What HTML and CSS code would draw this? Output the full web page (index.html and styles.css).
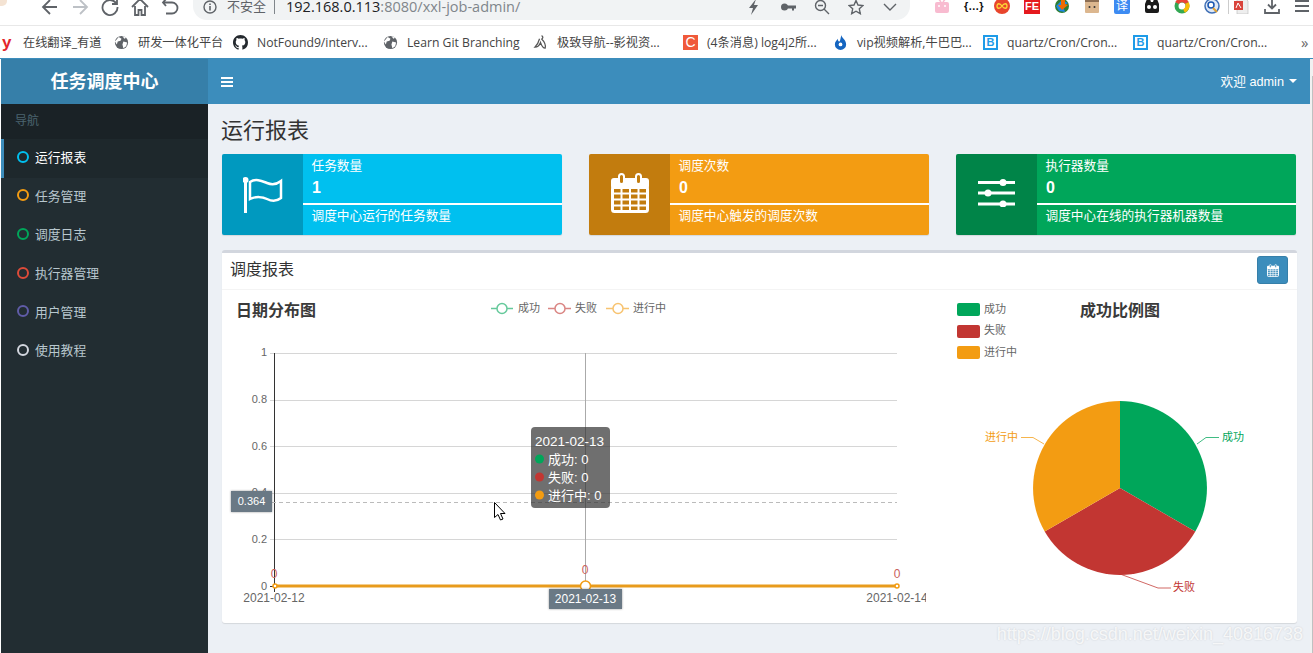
FILE: index.html
```html
<!DOCTYPE html>
<html lang="zh-CN">
<head>
    <meta charset="UTF-8">
    <meta name="viewport" content="width=device-width, initial-scale=1.0">
    <title>任务调度中心</title>
    <link rel="stylesheet" href="styles.css">
</head>
<body>
    <svg class="defs" width="0" height="0" aria-hidden="true">
        <symbol id="globe" viewBox="0 0 16 16">
            <circle cx="8" cy="8" r="7" fill="#5f6368"/>
            <path d="M5 2l3 2-1 2-3 1-1 3-2-3zM10 7l4 1-1 4-3 2-1-4zM9 1l4 2-2 1z" fill="#fff"/>
        </symbol>
        <symbol id="calendar" viewBox="0 0 38 40">
            <rect y="5" width="38" height="11" rx="3" fill="#fff"/>
            <rect x="8" y="1" width="5" height="10" rx="2.5" fill="currentColor" stroke="#fff" stroke-width="2"/>
            <rect x="25" y="1" width="5" height="10" rx="2.5" fill="currentColor" stroke="#fff" stroke-width="2"/>
            <rect x="1.5" y="14" width="35" height="24.5" rx="2" fill="none" stroke="#fff" stroke-width="3"/>
            <path d="M10.5 14v25M19 14v25M27.5 14v25M1 20.5h36M1 26.5h36M1 32.5h36" stroke="#fff" stroke-width="2" fill="none"/>
        </symbol>
    </svg>

    <!-- 浏览器工具栏 -->
    <div class="toolbar">
        <span class="avatar"></span>
        <div class="nav-icons">
            <svg viewBox="0 0 20 20"><path d="M17 10H4M10 3l-7 7 7 7" class="tb-line"/></svg>
            <svg viewBox="0 0 20 20"><path d="M3 10h13M10 3l7 7-7 7" class="tb-line tb-off"/></svg>
            <svg viewBox="0 0 20 20"><path d="M16 6a7.5 7.5 0 1 0 1.500 4M17 2v5h-5" class="tb-line"/></svg>
            <svg viewBox="0 0 20 20"><path d="M2 10l8-8 8 8M5 9v9h3.500v-5h3v5H15V9" class="tb-line"/></svg>
            <svg viewBox="0 0 20 20"><path d="M6 2L3 5.500 6 9M3 5.500h9a5.500 5.500 0 0 1 0 11H6" class="tb-line"/></svg>
        </div>
        <div class="address">
            <svg class="info-icon" viewBox="0 0 14 14"><circle cx="7" cy="7" r="6" fill="none" stroke="#5f6368" stroke-width="1.400"/><path d="M7 6v4.500M7 3.500v1.500" stroke="#5f6368" stroke-width="1.600"/></svg>
            <span class="not-secure">不安全</span>
            <span class="url"><b>192.168.0.113</b>:8080/xxl-job-admin/</span>
            <div class="address-icons">
                <svg viewBox="0 0 16 16"><path d="M10 0L3 9h4l-2 7 7-10H8z" fill="#5f6368"/></svg>
                <svg viewBox="0 0 16 16"><circle cx="4.500" cy="8" r="3.500" fill="#5f6368"/><path d="M7 6.500h9v3h-2v2h-2v-2H7z" fill="#5f6368"/></svg>
                <svg viewBox="0 0 16 16"><circle cx="6.500" cy="6.500" r="5" class="tb-thin"/><path d="M10 10l5 5M4 6.500h5" class="tb-thin"/></svg>
                <svg viewBox="0 0 16 16"><path d="M8 1.500l2 4.500 5 .5-3.700 3.300 1 4.900L8 12.200l-4.300 2.500 1-4.900L1 6.500l5-.5z" class="tb-thin"/></svg>
                <svg viewBox="0 0 16 16"><path d="M2 5l6 6 6-6" class="tb-thin"/></svg>
            </div>
        </div>
        <div class="extensions">
            <svg viewBox="0 0 16 16"><rect x="1" y="4" width="14" height="11" rx="2" fill="#f8bbd0"/><path d="M4 0l3 4M12 0L9 4" stroke="#f8bbd0" stroke-width="1.500"/><circle cx="5" cy="8" r="1" fill="#fff"/><circle cx="11" cy="8" r="1" fill="#fff"/></svg>
            <span class="ext-text">{…}</span>
            <svg viewBox="0 0 16 16"><circle cx="8" cy="8" r="8" fill="#e8452c"/><path d="M8 8c-2-3-5-3-5 0s3 3 5 0 5-3 5 0-3 3-5 0z" fill="none" stroke="#fdd835" stroke-width="1.300"/></svg>
            <span class="ext-fe">FE</span>
            <svg viewBox="0 0 16 16"><circle cx="8" cy="8" r="7" fill="#2e7d32"/><path d="M2 8l6-6 6 3-5 3 2 6-6-1z" fill="#1e88e5"/><path d="M7 1h4v5l3 1-6 5-4-5h3z" fill="#ef6c00"/></svg>
            <svg viewBox="0 0 16 16"><rect x="1" y="1" width="14" height="14" rx="1" fill="#dcb78f"/><rect x="1" y="1" width="14" height="3" fill="#8d6e53"/><circle cx="5.500" cy="9" r="1" fill="#333"/><circle cx="10.500" cy="9" r="1" fill="#333"/></svg>
            <span class="ext-yi">译</span>
            <svg viewBox="0 0 16 16"><path d="M3 1h3l1 3h2l1-3h3l2 5v7a2 2 0 0 1-2 2H3a2 2 0 0 1-2-2V6z" fill="#1a1a1a"/><circle cx="5" cy="9" r="2" fill="#fff"/><circle cx="11" cy="9" r="2" fill="#fff"/></svg>
            <svg viewBox="0 0 16 16"><circle cx="8" cy="8" r="5.500" fill="none" stroke="#34a853" stroke-width="4"/><path d="M3 5a6 6 0 0 1 10 0" fill="none" stroke="#ea4335" stroke-width="4"/><path d="M13 5a6 6 0 0 1-3 8" fill="none" stroke="#fbbc05" stroke-width="4"/></svg>
            <svg viewBox="0 0 16 16"><circle cx="8" cy="8" r="7" fill="#dfe8f5" stroke="#3f6fb5" stroke-width="1.500"/><circle cx="7" cy="7" r="3" fill="#fff" stroke="#1a56b0" stroke-width="1.500"/><path d="M9 10l4 4" stroke="#e0a030" stroke-width="2"/></svg>
            <span class="ext-sep"></span>
            <svg viewBox="0 0 16 16"><path d="M3 0h8l3 3v13H3z" fill="#eee" stroke="#bbb" stroke-width=".6"/><rect y="3" width="9" height="9" fill="#d9443c"/><path d="M2 10l2-5 3 5" fill="none" stroke="#fff"/></svg>
            <svg viewBox="0 0 16 16"><path d="M8 0v10M4 6.500L8 10.500l4-4M1 11v4h14v-4" class="tb-line"/></svg>
            <svg viewBox="0 0 16 16"><path d="M1 3h14M1 8h14M1 13h14" class="tb-line"/></svg>
        </div>
    </div>

    <!-- 书签栏 -->
    <div class="bookmarks">
        <div class="bookmark bookmark-first"><span class="bm-youdao">y</span><span>在线翻译_有道</span></div>
        <div class="bookmark bookmark-second"><svg class="bm-icon"><use href="#globe"/></svg><span>研发一体化平台</span></div>
        <div class="bookmark"><svg class="bm-icon" viewBox="0 0 16 16"><path fill="#24292e" d="M8 0C3.580 0 0 3.580 0 8c0 3.540 2.290 6.530 5.470 7.590.4.070.55-.17.55-.38 0-.19-.01-.82-.01-1.490-2.010.37-2.530-.49-2.690-.94-.09-.23-.48-.94-.82-1.130-.28-.15-.68-.52-.01-.53.630-.01 1.080.58 1.230.82.720 1.210 1.870.87 2.330.66.070-.52.280-.87.510-1.070-1.780-.2-3.640-.89-3.640-3.950 0-.87.310-1.590.820-2.150-.08-.2-.36-1.020.08-2.120 0 0 .67-.21 2.200.82.640-.18 1.320-.27 2-.27s1.360.09 2 .27c1.530-1.040 2.200-.82 2.200-.82.440 1.100.16 1.920.08 2.120.51.560.82 1.270.82 2.150 0 3.070-1.870 3.750-3.650 3.950.290.250.540.730.540 1.480 0 1.070-.01 1.930-.01 2.200 0 .210.150.460.550.380A8.010 8.010 0 0 0 16 8c0-4.420-3.580-8-8-8z"/></svg><span>NotFound9/interv...</span></div>
        <div class="bookmark"><svg class="bm-icon"><use href="#globe"/></svg><span>Learn Git Branching</span></div>
        <div class="bookmark"><svg class="bm-icon" viewBox="0 0 16 16"><path d="M9 1c2 0 2 3 0 3M9 4c3 3 5 6 4 10-2 0-4-3-5-6-1 3-3 5-6 5 2-2 4-5 5-9" fill="none" stroke="#555" stroke-width="1.300"/></svg><span>极致导航--影视资...</span></div>
        <div class="bookmark"><span class="bm-csdn">C</span><span>(4条消息) log4j2所...</span></div>
        <div class="bookmark"><svg class="bm-icon" viewBox="0 0 16 16"><path d="M9 0c0 3 5 5 5 10a6 6 0 0 1-12 0c0-3 2-4 3-6 0 2 1 3 2 3 1-2 1-4 2-7z" fill="#1565c0"/><circle cx="8" cy="10" r="2" fill="#fff"/></svg><span>vip视频解析,牛巴巴...</span></div>
        <div class="bookmark"><span class="bm-bean">B</span><span>quartz/Cron/Cron...</span></div>
        <div class="bookmark"><span class="bm-bean">B</span><span>quartz/Cron/Cron...</span></div>
        <span class="bm-more">»</span>
    </div>

    <div class="app">
        <!-- 左侧菜单 -->
        <aside class="sidebar">
            <div class="logo">任务调度中心</div>
            <div class="nav-header">导航</div>
            <ul class="menu">
                <li class="menu-item active"><i class="ring ring-aqua"></i>运行报表</li>
                <li class="menu-item"><i class="ring ring-yellow"></i>任务管理</li>
                <li class="menu-item"><i class="ring ring-green"></i>调度日志</li>
                <li class="menu-item"><i class="ring ring-red"></i>执行器管理</li>
                <li class="menu-item"><i class="ring ring-purple"></i>用户管理</li>
                <li class="menu-item"><i class="ring ring-gray"></i>使用教程</li>
            </ul>
        </aside>

        <div class="wrapper">
            <header class="topbar">
                <div class="hamburger"><span></span><span></span><span></span></div>
                <div class="user">欢迎 admin<i class="caret"></i></div>
            </header>

            <main class="content">
                <h1 class="page-title">运行报表</h1>

                <div class="info-row">
                    <div class="info-box bg-aqua">
                        <div class="info-icon-box">
                            <svg class="icon-flag" viewBox="0 0 40 36">
                                <rect x="1" y="2" width="3" height="34" fill="#fff"/>
                                <circle cx="2.500" cy="3" r="3" fill="#fff"/>
                                <path d="M7 5C13 1 19 4 24 6S33 8 38 4V21C33 25 28 24 24 22S13 19 7 22Z" fill="none" stroke="#fff" stroke-width="2.500"/>
                            </svg>
                        </div>
                        <div class="info-body">
                            <div class="info-label">任务数量</div>
                            <div class="info-number">1</div>
                            <div class="info-line"></div>
                            <div class="info-desc">调度中心运行的任务数量</div>
                        </div>
                    </div>
                    <div class="info-box bg-yellow">
                        <div class="info-icon-box">
                            <svg class="icon-calendar"><use href="#calendar"/></svg>
                        </div>
                        <div class="info-body">
                            <div class="info-label">调度次数</div>
                            <div class="info-number">0</div>
                            <div class="info-line"></div>
                            <div class="info-desc">调度中心触发的调度次数</div>
                        </div>
                    </div>
                    <div class="info-box bg-green">
                        <div class="info-icon-box">
                            <svg class="icon-sliders" viewBox="0 0 37 28">
                                <path d="M0 3.500h37M0 14h37M0 25h37" stroke="#fff" stroke-width="3"/>
                                <circle cx="25" cy="3.500" r="3.500" fill="#fff"/>
                                <circle cx="10" cy="14" r="3.500" fill="#fff"/>
                                <circle cx="25" cy="25" r="3.500" fill="#fff"/>
                            </svg>
                        </div>
                        <div class="info-body">
                            <div class="info-label">执行器数量</div>
                            <div class="info-number">0</div>
                            <div class="info-line"></div>
                            <div class="info-desc">调度中心在线的执行器机器数量</div>
                        </div>
                    </div>
                </div>

                <section class="panel">
                    <div class="panel-header">
                        <div class="panel-title">调度报表</div>
                        <button class="date-btn"><svg class="icon-btn"><use href="#calendar"/></svg></button>
                    </div>
                    <div class="panel-body">
                        <!-- 折线图, viewBox 用页面坐标 -->
                        <svg class="chart-line" viewBox="222 290 704 333">
                            <text x="236" y="316" class="chart-title">日期分布图</text>

                            <g class="legend-line">
                                <path d="M491 308.500h22" stroke="#00a65a"/>
                                <circle cx="502" cy="308.500" r="5" stroke="#00a65a"/>
                                <path d="M548 308.500h23" stroke="#c23632"/>
                                <circle cx="560" cy="308.500" r="5" stroke="#c23632"/>
                                <path d="M606 308.500h23" stroke="#f39c12"/>
                                <circle cx="618" cy="308.500" r="5" stroke="#f39c12"/>
                            </g>
                            <text x="518" y="312" class="legend-text">成功</text>
                            <text x="575" y="312" class="legend-text">失败</text>
                            <text x="633" y="312" class="legend-text">进行中</text>

                            <path class="grid" d="M270 353.500H897M270 400.500H897M270 446.500H897M270 493.500H897M270 539.500H897"/>
                            <path class="axis" d="M274.500 353V592M270 586.500H275"/>
                            <text x="267" y="356" class="tick tick-y">1</text>
                            <text x="267" y="403" class="tick tick-y">0.8</text>
                            <text x="267" y="450" class="tick tick-y">0.6</text>
                            <text x="267" y="496" class="tick tick-y">0.4</text>
                            <text x="267" y="543" class="tick tick-y">0.2</text>
                            <text x="267" y="590" class="tick tick-y">0</text>
                            <text x="274" y="602" class="tick tick-x">2021-02-12</text>
                            <text x="897" y="602" class="tick tick-x">2021-02-14</text>

                            <path class="cross-dash" d="M272 502.500H897"/>
                            <path class="cross-line" d="M585.500 353V586"/>
                            <path class="series" d="M275 586H897"/>
                            <circle cx="275" cy="586" r="2" class="dot"/>
                            <circle cx="897" cy="586" r="2" class="dot"/>
                            <circle cx="585.500" cy="586" r="5" class="dot"/>
                            <text x="274" y="578" class="zero-label">0</text>
                            <text x="585" y="574" class="zero-label">0</text>
                            <text x="897" y="578" class="zero-label">0</text>

                            <rect x="231" y="491" width="41" height="21" class="pointer-box"/>
                            <text x="251.500" y="505" class="pointer-text">0.364</text>
                            <rect x="549" y="589" width="73" height="20" class="pointer-box"/>
                            <text x="585.500" y="603" class="pointer-text pointer-date">2021-02-13</text>

                            <rect x="531" y="427" width="79" height="81" rx="4" class="tooltip-box"/>
                            <text x="535" y="446" class="tooltip-text tooltip-date">2021-02-13</text>
                            <circle cx="539.500" cy="459" r="4.500" fill="#00a65a"/>
                            <text x="548" y="464" class="tooltip-text">成功: 0</text>
                            <circle cx="539.500" cy="477" r="4.500" fill="#c23632"/>
                            <text x="548" y="482" class="tooltip-text">失败: 0</text>
                            <circle cx="539.500" cy="495" r="4.500" fill="#f39c12"/>
                            <text x="548" y="500" class="tooltip-text">进行中: 0</text>

                            <path class="mouse" d="M494.500 502.500v15l3.500-3 2.500 5.500 2.500-1-2.500-5.500h4.500z"/>
                        </svg>

                        <!-- 饼图 -->
                        <svg class="chart-pie" viewBox="926 290 371 333">
                            <rect x="957" y="303" width="23" height="13" rx="2" fill="#00a65a"/>
                            <rect x="957" y="325" width="23" height="13" rx="2" fill="#c23632"/>
                            <rect x="957" y="346" width="23" height="13" rx="2" fill="#f39c12"/>
                            <text x="984" y="313" class="legend-text">成功</text>
                            <text x="984" y="334" class="legend-text">失败</text>
                            <text x="984" y="356" class="legend-text">进行中</text>
                            <text x="1080" y="316" class="chart-title">成功比例图</text>

                            <path d="M1120 488V401A87 87 0 0 1 1195.300 531.500Z" fill="#00a65a"/>
                            <path d="M1120 488L1195.300 531.500A87 87 0 0 1 1044.700 531.500Z" fill="#c23632"/>
                            <path d="M1120 488L1044.700 531.500A87 87 0 0 1 1120 401Z" fill="#f39c12"/>

                            <path class="pie-lead" d="M1197 444L1206 437.500H1219" stroke="#00a65a"/>
                            <path class="pie-lead" d="M1120 574L1158 588H1171" stroke="#c23632"/>
                            <path class="pie-lead" d="M1044 444L1033 437.500H1021" stroke="#f39c12"/>
                            <text x="1222" y="441" class="pie-label label-green">成功</text>
                            <text x="1173" y="591" class="pie-label label-red">失败</text>
                            <text x="985" y="441" class="pie-label label-yellow">进行中</text>
                        </svg>
                    </div>
                </section>
            </main>
        </div>
        <div class="scrollbar"><div class="scroll-thumb"></div></div>
        <div class="watermark">https://blog.csdn.net/weixin_40816738</div>
    </div>
</body>
</html>
```

FILE: styles.css
```css
* {
    box-sizing: border-box;
}
html, body {
    height: 100%;
}
body {
    margin: 0;
    overflow: hidden;
    display: flex;
    flex-direction: column;
    background: #fff;
    font-family: "Liberation Sans", "Noto Sans CJK SC", sans-serif;
    color: #333;
}
.defs {
    position: absolute;
}

/* toolbar */
.toolbar {
    height: 26px;
    flex: none;
    display: flex;
    align-items: flex-start;
    overflow: hidden;
    border-bottom: 1px solid #e8e8e8;
    position: relative;
}
.avatar {
    width: 7px;
    height: 6px;
    flex: none;
    background: #f4e3d3;
    border-radius: 0 0 5px 0;
}
.nav-icons {
    display: flex;
    gap: 10px;
    margin-left: 33px;
    margin-top: -3px;
}
.nav-icons svg {
    width: 20px;
    height: 20px;
    flex: none;
}
.tb-line {
    fill: none;
    stroke: #5f6368;
    stroke-width: 1.8;
}
.tb-off {
    stroke: #bdc1c6;
}
.tb-thin {
    fill: none;
    stroke: #5f6368;
    stroke-width: 1.4;
}
.address {
    width: 717px;
    height: 20px;
    margin-left: 13px;
    flex: none;
    background: #f1f3f4;
    border-radius: 0 0 14px 14px;
    display: flex;
    align-items: center;
    padding: 0 10px 6px 10px;
}
.info-icon {
    width: 14px;
    height: 14px;
    flex: none;
}
.not-secure {
    margin-left: 10px;
    padding-right: 8px;
    font-size: 13px;
    line-height: 14px;
    color: #5f6368;
    border-right: 1px solid #80868b;
}
.url {
    margin-left: 11px;
    font-family: "Open Sans", "Noto Sans CJK SC", sans-serif;
    font-size: 14.5px;
    line-height: 14px;
    color: #80868b;
    white-space: nowrap;
}
.url b {
    font-weight: 400;
    color: #202124;
}
.address-icons {
    margin-left: auto;
    display: flex;
    gap: 18px;
    padding-right: 2px;
}
.address-icons svg {
    width: 16px;
    height: 16px;
}
.extensions {
    display: flex;
    align-items: center;
    gap: 14px;
    margin-left: 24px;
    margin-top: -2px;
}
.extensions svg,
.extensions span {
    width: 16px;
    height: 16px;
    flex: none;
}
.ext-text {
    font-size: 11px;
    font-weight: 700;
    line-height: 16px;
    text-align: center;
    white-space: nowrap;
    color: #111;
}
.ext-fe {
    background: #e5191e;
    color: #fff;
    font-size: 11px;
    font-weight: 700;
    line-height: 16px;
    text-align: center;
}
.ext-yi {
    background: #3d8bf2;
    border-radius: 2px;
    color: #fff;
    font-size: 12px;
    line-height: 16px;
    text-align: center;
}
.extensions .ext-sep {
    width: 1px;
    margin: 0 -9px 0 -6px;
    background: #ccc;
}

/* bookmarks */
.bookmarks {
    height: 32px;
    flex: none;
    display: flex;
    align-items: center;
    padding-left: 2px;
    font-family: "Open Sans", "Noto Sans CJK SC", sans-serif;
    font-size: 12.2px;
    color: #444;
    position: relative;
}
.bookmark {
    width: 150px;
    flex: none;
    display: flex;
    align-items: center;
    gap: 9px;
    white-space: nowrap;
}
.bookmark-first {
    width: 112px;
    gap: 13px;
}
.bookmark-second {
    width: 119px;
}
.bm-icon {
    width: 15px;
    height: 15px;
    flex: none;
}
.bm-youdao {
    width: 8px;
    color: #e3262b;
    font-family: "Liberation Sans", sans-serif;
    font-size: 17px;
    font-weight: 700;
    line-height: 15px;
}
.bm-csdn {
    width: 15px;
    height: 15px;
    background: #f0593a;
    color: #fff;
    font-family: "Liberation Sans", sans-serif;
    font-size: 14px;
    line-height: 15px;
    text-align: center;
}
.bm-bean {
    width: 15px;
    height: 15px;
    border: 2px solid #1e9be8;
    color: #1e9be8;
    font-family: "Liberation Sans", sans-serif;
    font-size: 11px;
    font-weight: 700;
    line-height: 11px;
    text-align: center;
}
.bm-more {
    margin-left: 18px;
    font-size: 15px;
    color: #666;
}

/* app */
.app {
    flex: 1;
    min-height: 0;
    display: flex;
    padding-left: 1px;
    border-top: 1px solid #3c8dbc;
    position: relative;
}
.sidebar {
    width: 207px;
    flex: none;
    background: #222d32;
}
.logo {
    height: 45px;
    background: #367fa9;
    color: #fff;
    font-size: 18px;
    font-weight: 700;
    line-height: 47px;
    text-align: center;
}
.nav-header {
    height: 35px;
    padding-left: 14px;
    background: #1a2226;
    color: #4b646f;
    font-size: 12px;
    line-height: 35px;
}
.menu {
    list-style: none;
    margin: 0;
    padding: 0;
}
.menu-item {
    height: 38.6px;
    display: flex;
    align-items: center;
    gap: 6px;
    padding-left: 16px;
    padding-bottom: 3px;
    border-left: 3px solid transparent;
    color: #b8c7ce;
    font-size: 12.8px;
}
.menu-item.active {
    background: #1e282c;
    border-left-color: #3c8dbc;
    color: #fff;
}
.ring {
    width: 12px;
    height: 12px;
    border: 2px solid;
    border-radius: 50%;
    margin-left: -3px;
}
.ring-aqua { border-color: #00c0ef; }
.ring-yellow { border-color: #f39c12; }
.ring-green { border-color: #00a65a; }
.ring-red { border-color: #dd4b39; }
.ring-purple { border-color: #605ca8; }
.ring-gray { border-color: #d2d6de; }

.wrapper {
    flex: 1;
    min-width: 0;
    display: flex;
    flex-direction: column;
    background: #ecf0f5;
}
.topbar {
    height: 45px;
    flex: none;
    display: flex;
    align-items: center;
    justify-content: space-between;
    padding: 0 13px 0 13px;
    background: #3c8dbc;
    color: #fff;
}
.hamburger {
    display: flex;
    flex-direction: column;
    gap: 2px;
    width: 12px;
}
.hamburger span {
    height: 2px;
    background: #fff;
}
.user {
    font-size: 12.7px;
    display: flex;
    align-items: center;
    padding-bottom: 2px;
}
.caret {
    margin-left: 5px;
    border-left: 4px solid transparent;
    border-right: 4px solid transparent;
    border-top: 4px solid #fff;
}

.content {
    flex: 1;
    min-height: 0;
    padding: 0 13px 0 14px;
}
.scrollbar {
    width: 3px;
    flex: none;
    padding-top: 17px;
    background: #f1f1f1;
}
.scroll-thumb {
    width: 1px;
    height: 100%;
    margin-left: 2px;
    background: #c1c1c1;
}
.page-title {
    height: 50px;
    margin: 0 0 0 -1px;
    font-size: 22px;
    font-weight: 400;
    line-height: 53px;
}
.info-row {
    display: grid;
    grid-template-columns: repeat(3, 340px);
    gap: 27px;
}
.info-box {
    height: 81px;
    display: flex;
    border-radius: 2px;
    overflow: hidden;
    color: #fff;
    box-shadow: 0 1px 1px rgba(0, 0, 0, 0.1);
}
.bg-aqua { background: #00c0ef; }
.bg-yellow { background: #f39c12; }
.bg-green { background: #00a65a; }
.info-icon-box {
    width: 81px;
    flex: none;
    display: flex;
    align-items: center;
    justify-content: center;
    background: rgba(0, 0, 0, 0.2);
}
.bg-aqua .info-icon-box { color: #009ac0; }
.bg-yellow .info-icon-box { color: #c27d0e; }
.bg-green .info-icon-box { color: #008548; }
.icon-flag {
    width: 40px;
    height: 36px;
}
.icon-calendar {
    width: 38px;
    height: 40px;
    margin-bottom: 3px;
}
.icon-sliders {
    width: 37px;
    height: 28px;
    margin-bottom: 4px;
}
.info-body {
    flex: 1;
}
.info-label {
    height: 23px;
    padding-left: 8.5px;
    font-size: 12.7px;
    line-height: 24px;
}
.info-number {
    height: 26px;
    padding-left: 9px;
    font-size: 16px;
    font-weight: 700;
    line-height: 21px;
}
.info-line {
    height: 2px;
    background: #fff;
}
.info-desc {
    padding-left: 8.5px;
    font-size: 12.7px;
    line-height: 22px;
}

.panel {
    height: 373px;
    margin-top: 15px;
    background: #fff;
    border-top: 3px solid #d2d6de;
    border-radius: 3px;
    box-shadow: 0 1px 1px rgba(0, 0, 0, 0.1);
    display: flex;
    flex-direction: column;
}
.panel-header {
    height: 37px;
    flex: none;
    display: flex;
    align-items: center;
    justify-content: space-between;
    padding: 0 9px 2px 9px;
    border-bottom: 1px solid #f4f4f4;
}
.panel-title {
    font-size: 16px;
    margin-bottom: 5px;
    margin-left: -1px;
}
.date-btn {
    width: 31px;
    height: 28px;
    padding: 0;
    display: flex;
    align-items: center;
    justify-content: center;
    background: #3c8dbc;
    border: 1px solid #367fa9;
    border-radius: 3px;
    color: #3c8dbc;
}
.icon-btn {
    width: 12px;
    height: 13px;
}
.panel-body {
    flex: 1;
    min-height: 0;
    display: flex;
}
.chart-line {
    width: 704px;
    height: 333px;
    flex: none;
}
.chart-pie {
    width: 371px;
    height: 333px;
    flex: none;
}

/* chart parts */
.chart-title {
    font-size: 16px;
    font-weight: 700;
    fill: #3a3a3a;
}
.legend-text {
    font-size: 11px;
    fill: #666;
}
.legend-line {
    opacity: 0.6;
    fill: #fff;
    stroke-width: 1.5;
}
.grid {
    fill: none;
    stroke: #d6d6d6;
    stroke-width: 1;
}
.axis {
    fill: none;
    stroke: #333;
    stroke-width: 1;
}
.tick {
    font-size: 11px;
    fill: #666;
}
.tick-y {
    text-anchor: end;
}
.tick-x {
    font-size: 12px;
    text-anchor: middle;
}
.cross-dash {
    fill: none;
    stroke: #bbb;
    stroke-dasharray: 4 3;
}
.cross-line {
    fill: none;
    stroke: #aaa;
}
.series {
    fill: none;
    stroke: #e89b1c;
    stroke-width: 3;
}
.dot {
    fill: #fff;
    stroke: #f39c12;
    stroke-width: 1.5;
}
.zero-label {
    font-size: 12px;
    fill: #c9605c;
    text-anchor: middle;
}
.pointer-box {
    fill: #6a7985;
    filter: drop-shadow(0 0 1px rgba(0, 0, 0, 0.4));
}
.pointer-text {
    font-size: 11px;
    fill: #fff;
    text-anchor: middle;
}
.pointer-date {
    font-size: 12px;
}
.tooltip-box {
    fill: rgba(50, 50, 50, 0.7);
}
.tooltip-text {
    font-size: 13px;
    fill: #fff;
}
.tooltip-date {
    font-size: 13.5px;
}
.mouse {
    fill: #fff;
    stroke: #000;
    stroke-width: 1;
}
.pie-lead {
    fill: none;
    stroke-width: 1;
    opacity: 0.75;
}
.pie-label {
    font-size: 11px;
}
.label-green { fill: #00a65a; }
.label-red { fill: #c23632; }
.label-yellow { fill: #f39c12; }

.watermark {
    position: absolute;
    right: 10px;
    bottom: 8px;
    font-size: 18px;
    color: rgba(255, 255, 255, 0.8);
    text-shadow: 0 0 2px rgba(0, 0, 0, 0.15);
}
```
